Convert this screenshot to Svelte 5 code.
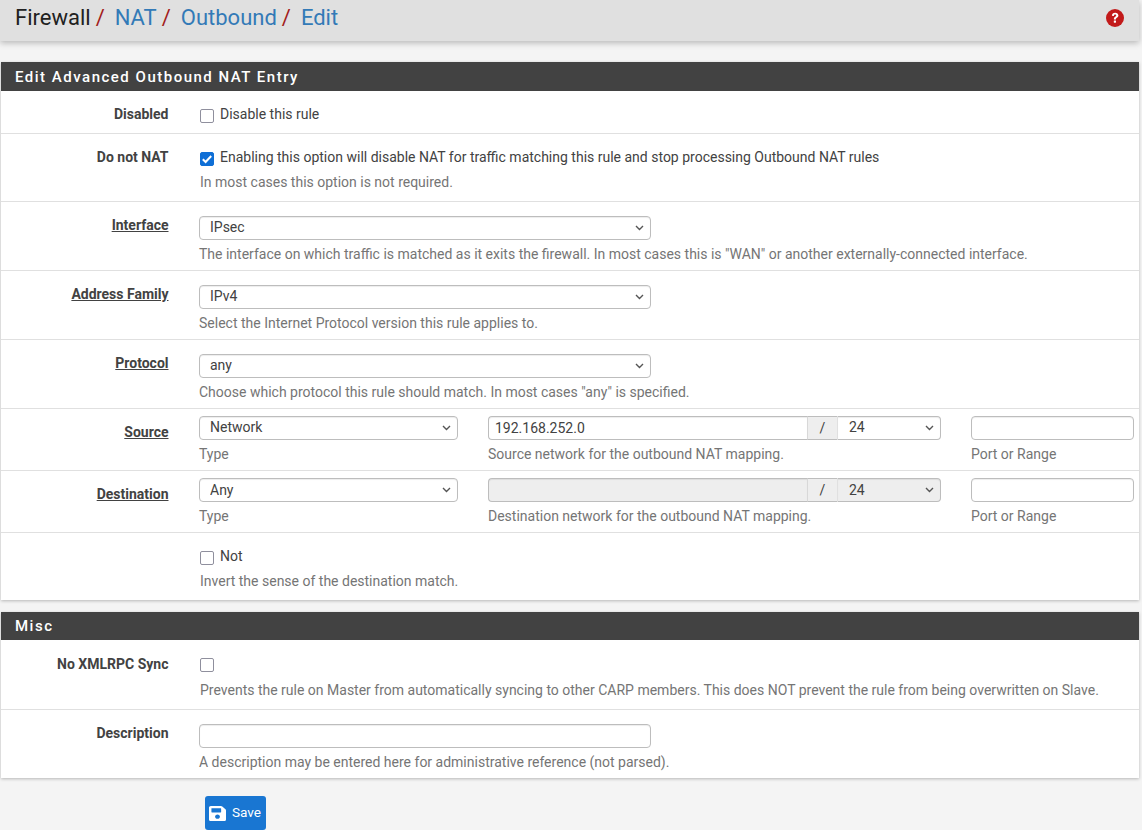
<script>
const crumbs = ['NAT', 'Outbound', 'Edit']
</script>

<header class="topbar">
  <h1>
    <span class="crumb">Firewall</span><span class="sep">/</span>
    {#each crumbs as c, i}
      <span class="crumb link">{c}</span>{#if i < crumbs.length - 1}<span class="sep">/</span>{/if}
    {/each}
  </h1>
  <svg class="help" viewBox="0 0 18 18" width="18" height="18">
    <circle cx="9" cy="9" r="9" fill="#c21a1a" />
    <path d="M5.9 6.8 C5.9 4.9 7.3 3.7 9.2 3.7 C11 3.7 12.4 4.9 12.4 6.5 C12.4 8.7 9.9 8.6 9.9 10.4 L7.9 10.4 C7.7 7.9 10.2 7.9 10.2 6.6 C10.2 6 9.7 5.6 9.1 5.6 C8.4 5.6 8 6.1 7.9 6.9 Z" fill="#fff" />
    <rect x="7.8" y="11.4" width="2.2" height="2.3" rx="0.4" fill="#fff" />
  </svg>
</header>

<main>
  <section class="panel first">
    <h2>Edit Advanced Outbound NAT Entry</h2>

    <div class="row r-disabled">
      <div class="label">Disabled</div>
      <div class="body">
        <label class="check"><input type="checkbox" />Disable this rule</label>
      </div>
    </div>

    <div class="row r-tall">
      <div class="label">Do not NAT</div>
      <div class="body">
        <label class="check"><input type="checkbox" checked />Enabling this option will disable NAT for traffic matching this rule and stop processing Outbound NAT rules</label>
        <p class="hint indent">In most cases this option is not required.</p>
      </div>
    </div>

    <div class="row r-select">
      <div class="label link-label">Interface</div>
      <div class="body">
        <select class="wide"><option>IPsec</option></select>
        <p class="hint">The interface on which traffic is matched as it exits the firewall. In most cases this is "WAN" or another externally-connected interface.</p>
      </div>
    </div>

    <div class="row r-select">
      <div class="label link-label">Address Family</div>
      <div class="body">
        <select class="wide"><option>IPv4</option></select>
        <p class="hint">Select the Internet Protocol version this rule applies to.</p>
      </div>
    </div>

    <div class="row r-select">
      <div class="label link-label">Protocol</div>
      <div class="body">
        <select class="wide"><option>any</option></select>
        <p class="hint">Choose which protocol this rule should match. In most cases "any" is specified.</p>
      </div>
    </div>

    <div class="row r-addr">
      <div class="label link-label">Source</div>
      <div class="body triple">
        <div>
          <select><option>Network</option></select>
          <p class="hint">Type</p>
        </div>
        <div>
          <div class="group">
            <input type="text" value="192.168.252.0" />
            <span class="slash">/</span>
            <select><option>24</option></select>
          </div>
          <p class="hint">Source network for the outbound NAT mapping.</p>
        </div>
        <div>
          <input type="text" />
          <p class="hint">Port or Range</p>
        </div>
      </div>
    </div>

    <div class="row r-addr dest">
      <div class="label link-label">Destination</div>
      <div class="body triple">
        <div>
          <select><option>Any</option></select>
          <p class="hint">Type</p>
        </div>
        <div>
          <div class="group">
            <input type="text" disabled />
            <span class="slash">/</span>
            <select disabled><option>24</option></select>
          </div>
          <p class="hint">Destination network for the outbound NAT mapping.</p>
        </div>
        <div>
          <input type="text" />
          <p class="hint">Port or Range</p>
        </div>
      </div>
    </div>

    <div class="row r-tall last">
      <div class="label"></div>
      <div class="body">
        <label class="check"><input type="checkbox" />Not</label>
        <p class="hint indent">Invert the sense of the destination match.</p>
      </div>
    </div>
  </section>

  <section class="panel">
    <h2>Misc</h2>

    <div class="row r-xml">
      <div class="label">No XMLRPC Sync</div>
      <div class="body">
        <label class="check"><input type="checkbox" /></label>
        <p class="hint indent">Prevents the rule on Master from automatically syncing to other CARP members. This does NOT prevent the rule from being overwritten on Slave.</p>
      </div>
    </div>

    <div class="row r-select last">
      <div class="label">Description</div>
      <div class="body">
        <input class="wide" type="text" />
        <p class="hint">A description may be entered here for administrative reference (not parsed).</p>
      </div>
    </div>
  </section>

  <button class="save">
    <svg viewBox="0 32 448 448" width="17" height="15" preserveAspectRatio="none">
      <path fill="#fff" d="M433.9 129.9l-83.9-83.9A48 48 0 0 0 316.1 32H48C21.5 32 0 53.5 0 80v352c0 26.5 21.5 48 48 48h352c26.5 0 48-21.5 48-48V163.9a48 48 0 0 0-14.1-34zM224 416c-35.3 0-64-28.7-64-64 0-35.3 28.7-64 64-64s64 28.7 64 64c0 35.3-28.7 64-64 64zm96-304.5V212c0 6.6-5.4 12-12 12H76c-6.6 0-12-5.4-12-12V108c0-6.6 5.4-12 12-12h228.5c3.2 0 6.2 1.3 8.5 3.5l3.5 3.5c2.3 2.3 3.5 5.3 3.5 8.5z" />
    </svg>
    <span class="save-text">Save</span>
  </button>
</main>

<style>
:global(body) {
  background: #f4f4f4;
  font-family: Roboto, "Liberation Sans", sans-serif;
  font-size: 14px;
  color: #424242;
}
* {
  box-sizing: border-box;
}
.topbar {
  height: 41px;
  background: #e0e0e0;
  box-shadow: 0 2px 6px rgba(0, 0, 0, 0.25);
  display: flex;
  justify-content: space-between;
  align-items: center;
  padding: 0 15px 5px 15px;
  margin-right: 3px;
}
h1 {
  display: flex;
  margin: 0;
  font-size: 22px;
  font-weight: 400;
  line-height: 34px;
  color: #212121;
  white-space: nowrap;
}
.link {
  color: #337ab7;
}
.sep {
  color: #a21c1c;
  margin: 0 10px 0 5px;
}
.help {
  display: block;
}
main {
  padding: 21px 3px 0 1px;
}
.panel {
  background: #fff;
  box-shadow: 0 1px 3px rgba(0, 0, 0, 0.25);
  margin-bottom: 12px;
}
h2 {
  margin: 0;
  height: 28px;
  background: #424242;
  color: #fff;
  font-size: 15px;
  font-weight: 500;
  line-height: 29px;
  letter-spacing: 1.5px;
  padding-left: 14px;
}
.panel.first h2 {
  height: 29px;
  line-height: 31px;
}
.row {
  display: grid;
  grid-template-columns: 168px 1fr;
  column-gap: 30px;
  border-bottom: 1px solid #e0e0e0;
}
.row.last {
  border-bottom: none;
}
.r-disabled { height: 43px; padding-top: 13px; }
.r-tall { height: 68px; padding-top: 13px; }
.r-tall.last { height: 67px; }
.r-select { height: 69px; padding-top: 14px; }
.r-select.last { height: 68px; }
.r-addr { height: 62px; padding-top: 7px; }
.r-xml { height: 70px; padding-top: 14px; }
.label {
  text-align: right;
  font-weight: 700;
  line-height: 20px;
  color: #424242;
  padding-right: 0.5px;
}
.r-select .label {
  margin-top: -1px;
}
.r-addr .label {
  margin-top: 6px;
}
.link-label {
  text-decoration: underline;
}
.check {
  display: flex;
  align-items: flex-start;
  line-height: 20px;
  color: #424242;
}
.check input {
  appearance: none;
  width: 14px;
  height: 14px;
  margin: 5px 6px 0 1px;
  border: 1.5px solid #8f8f9d;
  border-radius: 2px;
  background: #fff;
  flex: none;
}
.check input:checked {
  background: #0f6fd6 url("data:image/svg+xml,%3Csvg xmlns='http://www.w3.org/2000/svg' viewBox='0 0 14 14'%3E%3Cpath d='M2.8 7.2l2.8 2.8 5.6-6' fill='none' stroke='white' stroke-width='2'/%3E%3C/svg%3E") center / 14px no-repeat;
  border-color: #0f6fd6;
}
.hint {
  margin: 4px 0 0;
  font-size: 14px;
  line-height: 20px;
  color: #757575;
  white-space: nowrap;
}
.r-tall .hint {
  margin-top: 5px;
}
.indent {
  margin-left: 1px;
}
.r-xml .check {
  height: 19px;
}
.r-xml .check input {
  margin-top: 4px;
}
.r-xml .hint {
  margin-top: 7px;
}
select, input[type="text"] {
  display: block;
  width: 100%;
  height: 24px;
  border: 1px solid #bdbdbd;
  border-radius: 4px;
  background: #fff;
  font: inherit;
  font-size: 14px;
  color: #424242;
  padding: 0 6px;
  box-shadow: inset 0 1px 1px rgba(0, 0, 0, 0.075);
}
select {
  appearance: none;
  padding: 0 20px 2px 10px;
  background: #fff url("data:image/svg+xml,%3Csvg xmlns='http://www.w3.org/2000/svg' viewBox='0 0 9 6'%3E%3Cpath d='M1 1l3.5 3.5L8 1' fill='none' stroke='%23555' stroke-width='1.4'/%3E%3C/svg%3E") right 6px center / 9px 6px no-repeat;
}
.dest select {
  padding-bottom: 0;
}
select.wide, input.wide {
  width: 452px;
}
.body {
  padding-right: 6px;
}
.triple {
  display: grid;
  grid-template-columns: 259px 453px 163px;
  column-gap: 30px;
  padding: 0;
}
.group {
  display: flex;
}
.group input[type="text"] {
  flex: 1;
  min-width: 0;
  border-radius: 4px 0 0 4px;
  border-right: none;
}
.group input:disabled {
  background: #eee;
  opacity: 1;
}
.group select:disabled {
  background-color: #eee;
  opacity: 1;
}
.slash {
  width: 30px;
  flex: none;
  text-align: center;
  background: #eee;
  border: 1px solid #bdbdbd;
  border-width: 1px 0;
  border-left: 1px solid #d8d8d8;
  line-height: 22px;
  color: #424242;
}
.group select {
  width: 104px;
  flex: none;
  border-left: 1px solid #e0e0e0;
  padding-left: 11px;
  border-radius: 0 4px 4px 0;
}
.save {
  display: flex;
  align-items: center;
  gap: 6px;
  margin-left: 204px;
  margin-top: 18px;
  width: 61px;
  height: 34px;
  padding: 0 0 0 4px;
  border: none;
  border-radius: 3px;
  background: #1976d2;
  color: #fff;
  font: inherit;
  font-size: 13.6px;
}
.save-text {
  margin-top: -2px;
}
</style>
